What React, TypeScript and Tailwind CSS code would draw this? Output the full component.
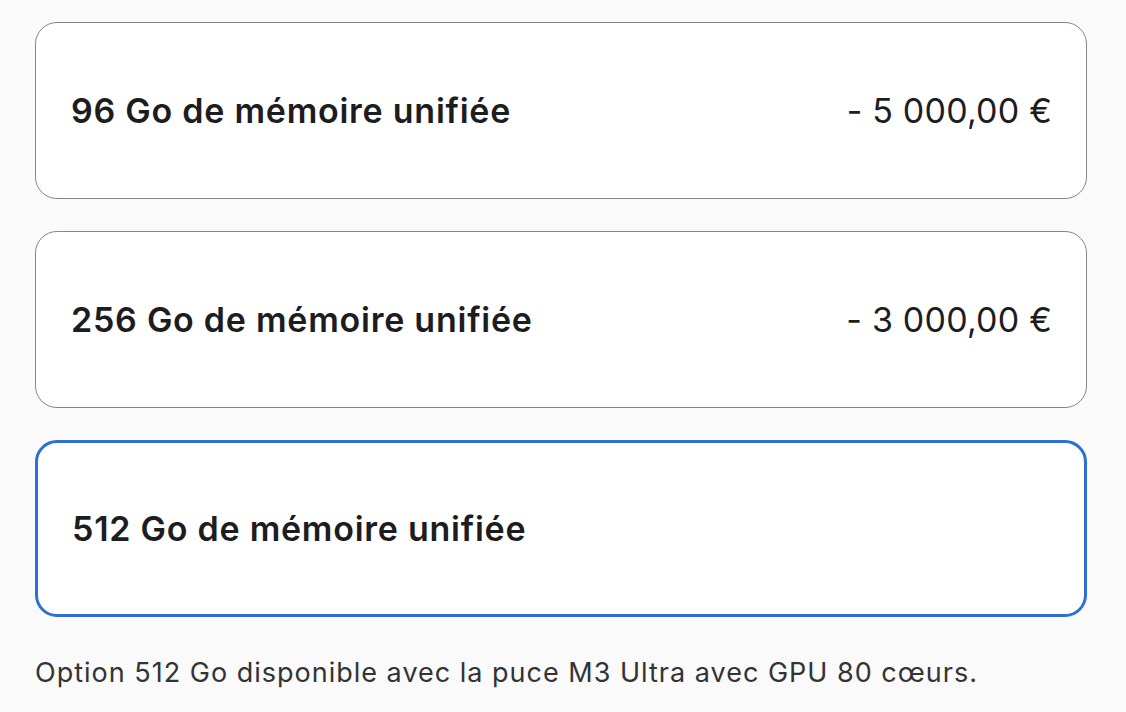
const options = [
  { label: "96 Go de mémoire unifiée", price: "- 5 000,00 €", selected: false },
  { label: "256 Go de mémoire unifiée", price: "- 3 000,00 €", selected: false },
  { label: "512 Go de mémoire unifiée", price: "", selected: true },
];

export default function App() {
  return (
    <div
      className="min-h-screen bg-[#fafafa] pl-[35px] pr-[39px] pt-[22px] text-[#1d1d1f]"
      style={{ fontFamily: "Inter, 'Noto Sans', sans-serif" }}
    >
      <div className="flex flex-col gap-[32px]">
        {options.map((o) => (
          <div
            key={o.label}
            className={
              o.selected
                ? "flex h-[177px] items-center justify-between rounded-[22px] border-[3px] border-[#2d6fd3] bg-white pl-[34px] pr-[32px]"
                : "flex h-[177px] items-center justify-between rounded-[22px] border border-[#868686] bg-white pl-[35px] pr-[34px]"
            }
          >
            <span className="text-[34px] font-semibold tracking-[0.75px]">{o.label}</span>
            <span className="text-[34px] font-normal tracking-[0.2px]">{o.price}</span>
          </div>
        ))}
      </div>
      <p className="mt-[36px] text-[27px] tracking-[1px] text-[#333336]">
        Option 512 Go disponible avec la puce M3 Ultra avec GPU 80 cœurs.
      </p>
    </div>
  );
}
